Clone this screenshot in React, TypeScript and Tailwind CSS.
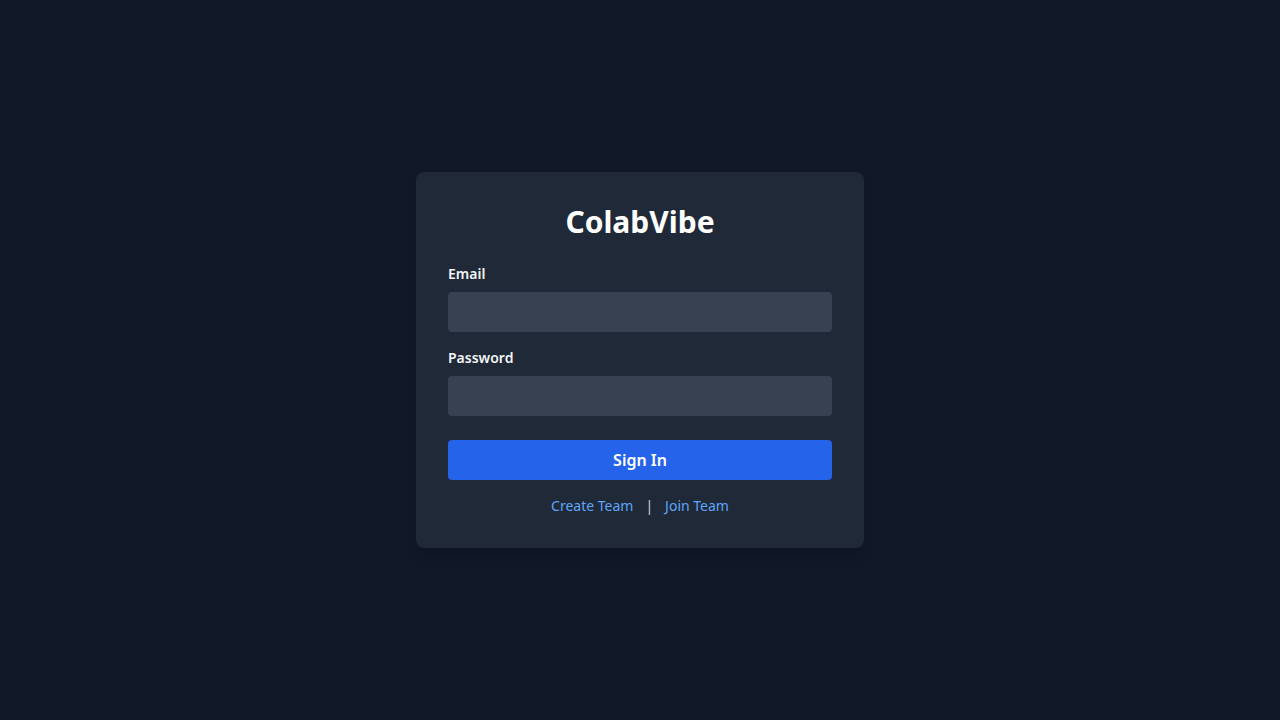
import React, { useState } from 'react';

export default function App() {
  const [email, setEmail] = useState('');
  const [password, setPassword] = useState('');

  return (
    <div
      className="min-h-screen bg-[#111827] flex items-center justify-center"
      style={{ fontFamily: '"Noto Sans", "Open Sans", sans-serif' }}
    >
      <div className="w-full max-w-md bg-[#1f2937] rounded-lg shadow-lg p-8">
        <h1 className="text-3xl font-bold text-white text-center mb-6">ColabVibe</h1>

        <form onSubmit={(e) => e.preventDefault()}>
          <div className="mb-4">
            <label className="block text-sm font-semibold text-[#f3f4f6] mb-2">Email</label>
            <input
              type="email"
              value={email}
              onChange={(e) => setEmail(e.target.value)}
              className="w-full h-10 px-3 rounded bg-[#374151] text-white outline-none"
            />
          </div>
          <div>
            <label className="block text-sm font-semibold text-[#f3f4f6] mb-2">Password</label>
            <input
              type="password"
              value={password}
              onChange={(e) => setPassword(e.target.value)}
              className="w-full h-10 px-3 rounded bg-[#374151] text-white outline-none"
            />
          </div>
          <button
            type="submit"
            className="mt-6 w-full h-10 rounded bg-[#2563eb] text-white font-semibold"
          >
            Sign In
          </button>
        </form>

        <div className="mt-4 flex items-center justify-center text-sm">
          <a href="#" className="text-[#60a5fa]">Create Team</a>
          <span className="mx-3 text-[#d1d5db]">|</span>
          <a href="#" className="text-[#60a5fa]">Join Team</a>
        </div>
      </div>
    </div>
  );
}
